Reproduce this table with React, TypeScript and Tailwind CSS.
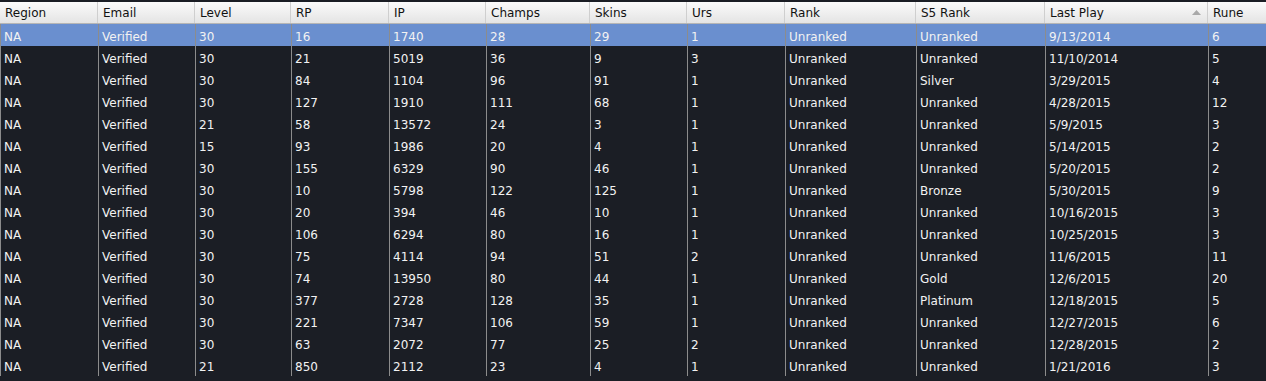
import React from 'react'

const columns = ['Region', 'Email', 'Level', 'RP', 'IP', 'Champs', 'Skins', 'Urs', 'Rank', 'S5 Rank', 'Last Play', 'Rune']

const rows: string[][] = [
  ['NA', 'Verified', '30', '16', '1740', '28', '29', '1', 'Unranked', 'Unranked', '9/13/2014', '6'],
  ['NA', 'Verified', '30', '21', '5019', '36', '9', '3', 'Unranked', 'Unranked', '11/10/2014', '5'],
  ['NA', 'Verified', '30', '84', '1104', '96', '91', '1', 'Unranked', 'Silver', '3/29/2015', '4'],
  ['NA', 'Verified', '30', '127', '1910', '111', '68', '1', 'Unranked', 'Unranked', '4/28/2015', '12'],
  ['NA', 'Verified', '21', '58', '13572', '24', '3', '1', 'Unranked', 'Unranked', '5/9/2015', '3'],
  ['NA', 'Verified', '15', '93', '1986', '20', '4', '1', 'Unranked', 'Unranked', '5/14/2015', '2'],
  ['NA', 'Verified', '30', '155', '6329', '90', '46', '1', 'Unranked', 'Unranked', '5/20/2015', '2'],
  ['NA', 'Verified', '30', '10', '5798', '122', '125', '1', 'Unranked', 'Bronze', '5/30/2015', '9'],
  ['NA', 'Verified', '30', '20', '394', '46', '10', '1', 'Unranked', 'Unranked', '10/16/2015', '3'],
  ['NA', 'Verified', '30', '106', '6294', '80', '16', '1', 'Unranked', 'Unranked', '10/25/2015', '3'],
  ['NA', 'Verified', '30', '75', '4114', '94', '51', '2', 'Unranked', 'Unranked', '11/6/2015', '11'],
  ['NA', 'Verified', '30', '74', '13950', '80', '44', '1', 'Unranked', 'Gold', '12/6/2015', '20'],
  ['NA', 'Verified', '30', '377', '2728', '128', '35', '1', 'Unranked', 'Platinum', '12/18/2015', '5'],
  ['NA', 'Verified', '30', '221', '7347', '106', '59', '1', 'Unranked', 'Unranked', '12/27/2015', '6'],
  ['NA', 'Verified', '30', '63', '2072', '77', '25', '2', 'Unranked', 'Unranked', '12/28/2015', '2'],
  ['NA', 'Verified', '21', '850', '2112', '23', '4', '1', 'Unranked', 'Unranked', '1/21/2016', '3'],
]

const grid =
  'grid grid-cols-[97px_97px_96px_98px_97px_104px_97px_98px_131px_129px_163px_59px]'

const App = () => (
  <div className="w-[1266px] h-[381px] overflow-hidden bg-[#1b1e25] pt-[2px] font-['DejaVu_Sans',Verdana,sans-serif] text-[12px]">
    <div className={`${grid} h-[22px] bg-gradient-to-b from-[#fbfbfb] to-[#e4e4e4] border-b border-[#b5b5b5]`}>
      {columns.map((c, i) => (
        <div
          key={c}
          className="flex items-center justify-between pl-[5px] pr-[6px] border-l border-[#cfcfcf] first:border-l-0 text-[#111]"
        >
          <span>{c}</span>
          {i === 10 && (
            <svg width="9" height="5" viewBox="0 0 9 5" className="mb-[1px]">
              <path d="M0 5 L4.5 0 L9 5 Z" fill="#a9a9a9" />
            </svg>
          )}
        </div>
      ))}
    </div>
    <div className="border-l border-[#8c8c8c]">
      {rows.map((r, ri) => (
        <div
          key={ri}
          className={`${grid} h-[22px] ${ri === 0 ? 'bg-[#6a8fcf]' : ''}`}
        >
          {r.map((v, ci) => (
            <div
              key={ci}
              className="flex items-center pt-[3px] pl-[3px] border-l border-[#8c8c8c] first:border-l-0 text-[#f2f2f2] whitespace-nowrap"
            >
              {v}
            </div>
          ))}
        </div>
      ))}
    </div>
  </div>
)

export default App
